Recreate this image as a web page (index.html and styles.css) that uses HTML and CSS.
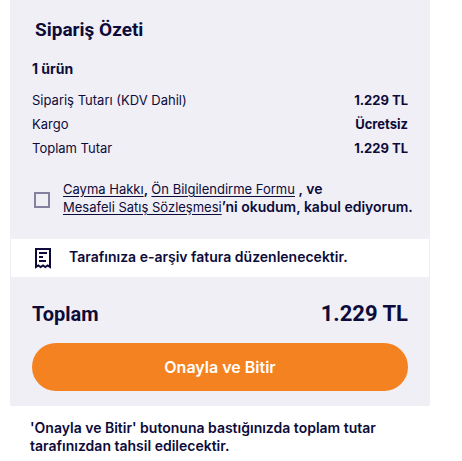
FILE: index.html
```html
<!DOCTYPE html>
<html lang="tr">
<head>
<meta charset="utf-8">
<meta name="viewport" content="width=device-width, initial-scale=1">
<title>Sipariş Özeti</title>
<link rel="stylesheet" href="styles.css">
</head>
<body>
<main class="checkout">
  <section class="summary">
    <h1 class="title">Sipariş Özeti</h1>
    <p class="count">1 ürün</p>
    <dl class="lines">
      <div class="line"><dt>Sipariş Tutarı (KDV Dahil)</dt><dd>1.229 TL</dd></div>
      <div class="line"><dt>Kargo</dt><dd>Ücretsiz</dd></div>
      <div class="line"><dt>Toplam Tutar</dt><dd>1.229 TL</dd></div>
    </dl>
    <div class="consent">
      <input class="check" type="checkbox" id="terms">
      <label class="terms" for="terms"><a href="#">Cayma Hakkı</a>, <a href="#">Ön Bilgilendirme Formu</a> , ve<br><a href="#">Mesafeli Satış Sözleşmesi</a>’ni okudum, kabul ediyorum.</label>
    </div>
    <div class="invoice">
      <svg class="receipt" viewBox="0 0 16 21" aria-hidden="true">
        <path d="M1 19V1h14v18l-2.300-1.500-2.400 1.500L8 17.500 5.700 19l-2.400-1.500z" fill="none" stroke="currentColor" stroke-width="2"/>
        <path d="M4 5h8M4 9h4M4 13h7" fill="none" stroke="currentColor" stroke-width="2"/>
      </svg>
      <p>Tarafınıza e-arşiv fatura düzenlenecektir.</p>
    </div>
    <div class="total"><span class="total-label">Toplam</span><span class="total-price">1.229 TL</span></div>
    <button class="submit" type="button">Onayla ve Bitir</button>
  </section>
  <p class="note">'Onayla ve Bitir' butonuna bastığınızda toplam tutar tarafınızdan tahsil edilecektir.</p>
</main>
</body>
</html>
```
FILE: styles.css
```css
* { box-sizing: border-box; }

body, h1, p, dl, dd { margin: 0; }

body {
  background: #fff;
  color: #0d0b3a;
  font: 400 13px/18px Inter, "Liberation Sans", sans-serif;
}

.checkout { padding: 0 32px 0 10px; }

.summary {
  background: #f0eff5;
  padding: 16px 0 15px;
}

.title {
  padding: 0 25px;
  font: 700 19px/28px Roboto, sans-serif;
}

.count {
  padding: 16px 22px 0;
  font-size: 14px;
  font-weight: 700;
}

.lines { padding: 10px 22px 0; }

.line {
  display: flex;
  justify-content: space-between;
  line-height: 24px;
}

.line dd { font-weight: 700; }

.consent {
  display: flex;
  align-items: center;
  gap: 13px;
  padding: 20px 18px 23px 24px;
}

.check {
  appearance: none;
  flex: none;
  width: 16px;
  height: 16px;
  margin: 4px 0 0;
  border: 2px solid #86809f;
}

.check:checked { background: #0d0b3a; }

.terms {
  font-size: 14px;
  font-weight: 600;
  white-space: nowrap;
}

.terms a {
  color: inherit;
  font-size: 13px;
  font-weight: 400;
  text-underline-offset: 2px;
}

.invoice {
  display: flex;
  align-items: center;
  gap: 18px;
  margin: 0 1px;
  padding: 0 24px;
  height: 38px;
  background: #fff;
  font-size: 14px;
  font-weight: 600;
}

.invoice p { padding-bottom: 2px; }

.receipt {
  width: 16px;
  height: 21px;
}

.total {
  display: flex;
  align-items: center;
  justify-content: space-between;
  padding: 22px 22px 14px;
  font: 700 20px/30px Roboto, sans-serif;
}

.total-price { font-size: 22px; }

.submit {
  display: block;
  width: calc(100% - 44px);
  height: 48px;
  margin: 0 22px;
  border: 0;
  border-radius: 24px;
  background: #f58220;
  color: #fff;
  font: 600 16px/20px Inter, sans-serif;
}

.note {
  padding: 13px 20px 0;
  font-size: 14px;
  font-weight: 600;
}
```
